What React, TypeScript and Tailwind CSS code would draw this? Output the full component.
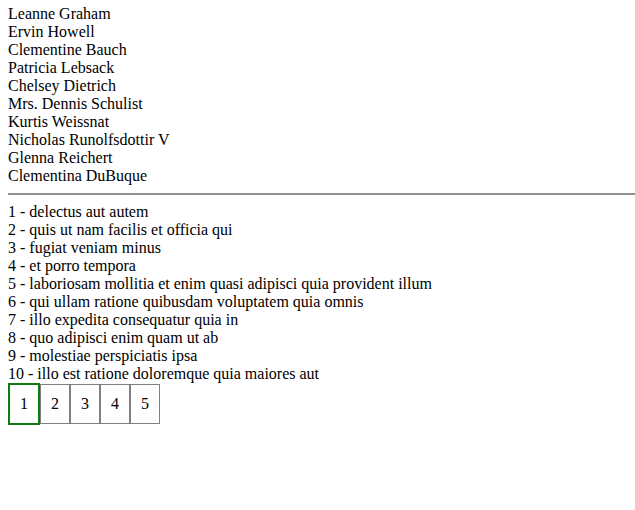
import { useState } from 'react'

const users = [
  'Leanne Graham',
  'Ervin Howell',
  'Clementine Bauch',
  'Patricia Lebsack',
  'Chelsey Dietrich',
  'Mrs. Dennis Schulist',
  'Kurtis Weissnat',
  'Nicholas Runolfsdottir V',
  'Glenna Reichert',
  'Clementina DuBuque',
]

const posts = [
  'delectus aut autem',
  'quis ut nam facilis et officia qui',
  'fugiat veniam minus',
  'et porro tempora',
  'laboriosam mollitia et enim quasi adipisci quia provident illum',
  'qui ullam ratione quibusdam voluptatem quia omnis',
  'illo expedita consequatur quia in',
  'quo adipisci enim quam ut ab',
  'molestiae perspiciatis ipsa',
  'illo est ratione doloremque quia maiores aut',
]

export default function App() {
  const [page, setPage] = useState(1)

  return (
    <div className="pt-[5px] pl-[8px] text-[16px] leading-[18px] text-black font-['Liberation_Serif',_'Times_New_Roman',_serif]">
      <div>
        {users.map((name) => (
          <div key={name}>{name}</div>
        ))}
      </div>
      <hr className="my-2 h-0 border-t border-b border-[#8e8e8e]" />
      <div>
        {posts.map((title, i) => (
          <div key={i}>
            {i + 1} - {title}
          </div>
        ))}
      </div>
      <div className="flex items-center">
        {[1, 2, 3, 4, 5].map((n) => (
          <button
            key={n}
            onClick={() => setPage(n)}
            className={
              n === page
                ? 'p-[10px] bg-white border-2 border-[#117a11] leading-[18px]'
                : 'p-[10px] bg-white border border-[#808080] leading-[18px]'
            }
          >
            {n}
          </button>
        ))}
      </div>
    </div>
  )
}
